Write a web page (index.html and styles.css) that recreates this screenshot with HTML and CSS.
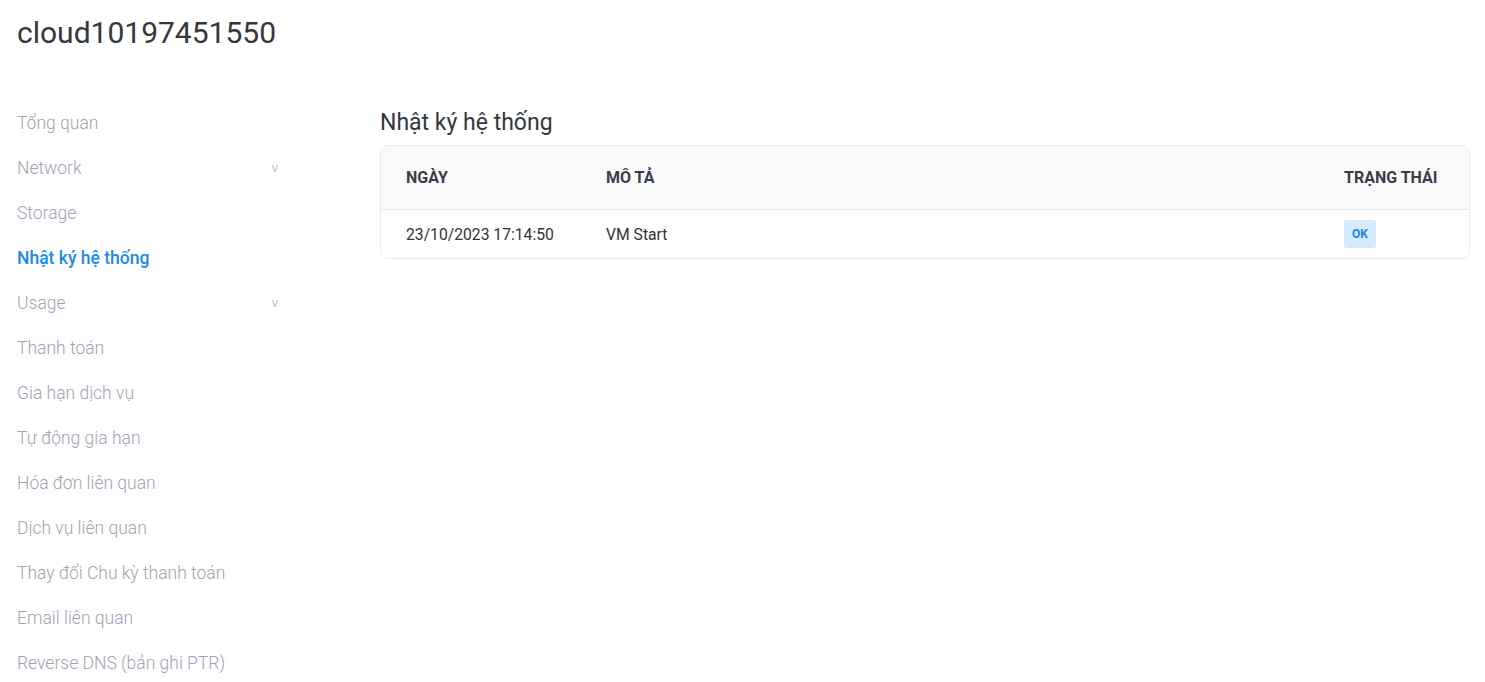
FILE: index.html
```html
<!DOCTYPE html>
<html>
<head>
    <title>cloud10197451550</title>
    <link rel="stylesheet" href="styles.css">
</head>
<body>
    <h1 class="page-title">cloud10197451550</h1>
    <div class="layout">
        <ul class="side-menu">
            <li><a href="#">Tổng quan</a></li>
            <li><a href="#">Network</a><span class="caret">v</span></li>
            <li><a href="#">Storage</a></li>
            <li class="active"><a href="#">Nhật ký hệ thống</a></li>
            <li><a href="#">Usage</a><span class="caret">v</span></li>
            <li><a href="#">Thanh toán</a></li>
            <li><a href="#">Gia hạn dịch vụ</a></li>
            <li><a href="#">Tự động gia hạn</a></li>
            <li><a href="#">Hóa đơn liên quan</a></li>
            <li><a href="#">Dịch vụ liên quan</a></li>
            <li><a href="#">Thay đổi Chu kỳ thanh toán</a></li>
            <li><a href="#">Email liên quan</a></li>
            <li><a href="#">Reverse DNS (bản ghi PTR)</a></li>
        </ul>

        <div class="content">
            <h2 class="section-title">Nhật ký hệ thống</h2>
            <div class="table-card">
                <table class="log-table">
                    <thead>
                        <tr>
                            <th class="col-date">Ngày</th>
                            <th>Mô tả</th>
                            <th class="col-status">Trạng thái</th>
                        </tr>
                    </thead>
                    <tbody>
                        <tr>
                            <td>23/10/2023 17:14:50</td>
                            <td>VM Start</td>
                            <td><span class="badge">OK</span></td>
                        </tr>
                    </tbody>
                </table>
            </div>
        </div>
    </div>
</body>
</html>
```

FILE: styles.css
```css
body {
    font-family: Roboto, "Noto Sans", Arial, sans-serif;
    margin: 0;
    padding: 0 15px 0 17px;
    background-color: #fff;
    color: #333;
}
.page-title {
    font-size: 30px;
    font-weight: 400;
    color: #363640;
    margin: 0;
    padding-top: 15px;
    line-height: 36px;
}
.layout {
    display: flex;
    margin-top: 49px;
}
.side-menu {
    list-style: none;
    margin: 0;
    padding: 0;
    width: 263px;
    flex-shrink: 0;
    margin-right: 100px;
}
.side-menu li {
    display: flex;
    justify-content: space-between;
    align-items: center;
    height: 45px;
    font-size: 17.5px;
}
.side-menu a {
    color: #a2a2b4;
    font-weight: 300;
    text-decoration: none;
}
.side-menu .caret {
    color: #a4a4b6;
    font-size: 13px;
    font-weight: 300;
    margin-right: 2px;
}
.side-menu li.active a {
    color: #1a8ce6;
    font-weight: 500;
}
.content {
    flex: 1;
}
.section-title {
    font-size: 23px;
    font-weight: 400;
    color: #363640;
    margin: 10px 0 9px;
    line-height: 26px;
}
.table-card {
    border: 1px solid #ebebeb;
    border-radius: 8px;
    overflow: hidden;
}
.log-table {
    width: 100%;
    border-collapse: collapse;
    font-size: 16px;
}
.log-table th {
    background-color: #fafafa;
    text-align: left;
    text-transform: uppercase;
    font-weight: 700;
    color: #3c3c48;
    height: 63px;
    padding: 0 25px;
    border-bottom: 1px solid #e8e8e8;
    white-space: nowrap;
}
.log-table th.col-date {
    width: 150px;
}
.log-table th.col-status {
    width: 94px;
    padding-right: 31px;
    padding-left: 0;
}
.log-table td {
    height: 48px;
    padding: 0 25px;
    font-size: 15.7px;
    color: #333;
    white-space: nowrap;
}
.log-table td:last-child {
    padding-left: 0;
}
.badge {
    display: inline-block;
    vertical-align: middle;
    background-color: #d3ebfc;
    color: #1f86d6;
    font-size: 12px;
    font-weight: 700;
    padding: 7px 8px;
    border-radius: 3px;
    line-height: 14px;
}
```
